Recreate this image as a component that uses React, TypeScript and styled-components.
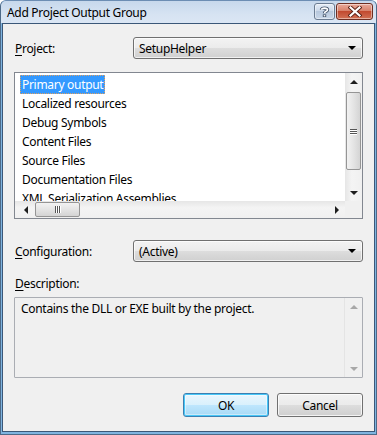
import React from 'react';
import styled, { createGlobalStyle } from 'styled-components';

const Global = createGlobalStyle`
  html, body {
    margin: 0;
    padding: 0;
    background: #ffffff;
  }
  * {
    box-sizing: border-box;
  }
`;

const Window = styled.div`
  width: 377px;
  height: 435px;
  display: flex;
  flex-direction: column;
  background: #7fb4e0;
  border: 1px solid #4d6a88;
  border-top-color: #6c8db3;
  border-radius: 6px 6px 0 0;
  padding: 0 1px 2px 1px;
  font-family: 'Noto Sans', 'Open Sans', sans-serif;
  font-size: 12px;
  letter-spacing: -0.3px;
  color: #000;
`;

const TitleBar = styled.div`
  height: 22px;
  flex: none;
  display: flex;
  align-items: center;
  padding: 0 3px 0 6px;
  margin: 0 -1px;
  border-radius: 5px 5px 0 0;
  background: linear-gradient(#c7d8ec, #d6e3f2 60%, #dbe6f4);
`;

const Title = styled.div`
  flex: 1;
  font-size: 12px;
  color: #000;
  padding-top: 1px;
`;

const CaptionButton = styled.div<{ $danger?: boolean }>`
  height: 17px;
  width: ${(p) => (p.$danger ? '37px' : '21px')};
  margin-left: ${(p) => (p.$danger ? '1px' : '0')};
  border: 1px solid ${(p) => (p.$danger ? '#6e2e22' : '#6b7c92')};
  border-radius: 3px;
  display: flex;
  align-items: center;
  justify-content: center;
  background: ${(p) =>
    p.$danger
      ? 'linear-gradient(#e9a99a, #d8826c 45%, #c24a30 50%, #d27256)'
      : 'linear-gradient(#e4ecf6, #ccd9ea 45%, #b7c8dd 50%, #c9d7e8)'};
  box-shadow: inset 0 0 0 1px rgba(255, 255, 255, 0.45);
  margin-top: -2px;
`;

const Client = styled.div`
  flex: 1;
  background: #f0f0f0;
  border: 1px solid #3b5778;
  display: flex;
  flex-direction: column;
  padding: 13px 11px 0 11px;
`;

const FieldRow = styled.div`
  display: flex;
  align-items: center;
  height: 22px;
`;

const Label = styled.div`
  width: 119px;
  flex: none;
  padding-left: 1px;
`;

const Key = styled.span`
  text-decoration: underline;
  text-underline-offset: 2px;
`;

const Combo = styled.div`
  flex: 1;
  height: 22px;
  border: 1px solid #707070;
  border-radius: 3px;
  background: linear-gradient(#f3f3f3, #ebebeb 50%, #dddddd 51%, #d0d0d0);
  box-shadow: inset 0 0 0 1px rgba(255, 255, 255, 0.7);
  display: flex;
  align-items: center;
  padding: 0 6px 0 5px;
`;

const ComboText = styled.div`
  flex: 1;
`;

const Caret = styled.div`
  width: 0;
  height: 0;
  border-left: 4px solid transparent;
  border-right: 4px solid transparent;
  border-top: 4px solid #000;
`;

const ListBox = styled.div`
  margin-top: 13px;
  height: 147px;
  border: 1px solid #828790;
  background: #fff;
  display: grid;
  grid-template-columns: 1fr 17px;
  grid-template-rows: 1fr 17px;
`;

const Items = styled.div`
  overflow: hidden;
  padding: 2px 4px 0 5px;
  display: flex;
  flex-direction: column;
`;

const Item = styled.div<{ $selected?: boolean }>`
  height: 19px;
  line-height: 19px;
  flex: none;
  align-self: flex-start;
  padding: 0 2px;
  white-space: nowrap;
  color: ${(p) => (p.$selected ? '#fff' : '#000')};
  background: ${(p) => (p.$selected ? '#3399ff' : 'transparent')};
  outline: ${(p) => (p.$selected ? '1px dotted #e0a060' : 'none')};
  outline-offset: -1px;
`;

const VScroll = styled.div`
  background: linear-gradient(90deg, #e6e6e6, #f4f4f4 40%, #f0f0f0);
  display: flex;
  flex-direction: column;
  align-items: center;
  justify-content: space-between;
`;

const HScroll = styled.div`
  background: linear-gradient(#e6e6e6, #f4f4f4 40%, #f0f0f0);
  display: flex;
  align-items: center;
  padding: 0 0 0 6px;
`;

const Corner = styled.div`
  background: #f0f0f0;
`;

const ArrowBox = styled.div<{ $h?: boolean }>`
  width: ${(p) => (p.$h ? '10px' : '17px')};
  height: 17px;
  display: flex;
  align-items: center;
  justify-content: center;
  flex: none;
`;

const Tri = styled.div<{ $dir: 'up' | 'down' | 'left' | 'right'; $dim?: boolean }>`
  width: 0;
  height: 0;
  ${(p) => {
    const c = p.$dim ? '#a8a8a8' : '#1e1e1e';
    if (p.$dir === 'up')
      return `border-left:4px solid transparent;border-right:4px solid transparent;border-bottom:4px solid ${c};`;
    if (p.$dir === 'down')
      return `border-left:4px solid transparent;border-right:4px solid transparent;border-top:4px solid ${c};`;
    if (p.$dir === 'left')
      return `border-top:4px solid transparent;border-bottom:4px solid transparent;border-right:4px solid ${c};`;
    return `border-top:4px solid transparent;border-bottom:4px solid transparent;border-left:4px solid ${c};`;
  }}
`;

const VThumb = styled.div`
  width: 15px;
  height: 78px;
  margin-bottom: auto;
  margin-top: 2px;
  border: 1px solid #959595;
  border-radius: 2px;
  background: linear-gradient(90deg, #f2f2f2, #e4e4e4 50%, #d4d4d4);
  display: flex;
  align-items: center;
  justify-content: center;
`;

const HThumb = styled.div`
  width: 45px;
  height: 15px;
  margin-left: 4px;
  margin-right: auto;
  border: 1px solid #959595;
  border-radius: 2px;
  background: linear-gradient(#f2f2f2, #e4e4e4 50%, #d4d4d4);
  display: flex;
  align-items: center;
  justify-content: center;
`;

const Grip = styled.div<{ $h?: boolean }>`
  display: flex;
  flex-direction: ${(p) => (p.$h ? 'row' : 'column')};
  gap: 1px;
  & > i {
    display: block;
    background: #555;
    width: ${(p) => (p.$h ? '1px' : '7px')};
    height: ${(p) => (p.$h ? '7px' : '1px')};
    box-shadow: ${(p) => (p.$h ? '1px 0 0 #fff' : '0 1px 0 #fff')};
  }
`;

const ConfigRow = styled(FieldRow)`
  margin-top: 21px;
`;

const DescLabel = styled.div`
  margin-top: 13px;
  padding-left: 1px;
  line-height: 17px;
`;

const DescBox = styled.div`
  margin-top: 5px;
  height: 81px;
  border: 1px solid #aaadb3;
  border-radius: 1px;
  background: #f0f0f0;
  display: flex;
`;

const DescText = styled.div`
  flex: 1;
  padding: 2px 6px;
  line-height: 17px;
`;

const DescScroll = styled(VScroll)`
  width: 18px;
  background: #f0f0f0;
  border-left: 1px solid #e4e4e4;
`;

const Footer = styled.div`
  margin-top: 15px;
  display: flex;
  justify-content: flex-end;
  gap: 8px;
`;

const Button = styled.div<{ $default?: boolean }>`
  width: 86px;
  height: 24px;
  border-radius: 3px;
  display: flex;
  align-items: center;
  justify-content: center;
  border: 1px solid ${(p) => (p.$default ? '#3c7fb1' : '#707070')};
  background: ${(p) =>
    p.$default
      ? 'linear-gradient(#eaf6fd, #d9f0fc 50%, #bee6fd 51%, #a7d9f5)'
      : 'linear-gradient(#f2f2f2, #ebebeb 50%, #dddddd 51%, #cfcfcf)'};
  box-shadow: ${(p) =>
    p.$default
      ? 'inset 0 0 0 1px #48c8f8, inset 0 0 0 2px rgba(255,255,255,0.4)'
      : 'inset 0 0 0 1px rgba(255,255,255,0.75)'};
`;

const items = [
  'Primary output',
  'Localized resources',
  'Debug Symbols',
  'Content Files',
  'Source Files',
  'Documentation Files',
  'XML Serialization Assemblies',
];

function HelpGlyph() {
  return (
    <svg width="11" height="11" viewBox="0 0 11 11">
      <path
        d="M2.5 3.8 C2.5 1.5 8.5 1.5 8.5 3.8 C8.5 5.6 5.5 5.5 5.5 7.2"
        fill="none"
        stroke="#44546a"
        strokeWidth="3.4"
      />
      <rect x="3.8" y="8.4" width="3.4" height="2.6" fill="#44546a" />
      <path
        d="M2.5 3.8 C2.5 1.5 8.5 1.5 8.5 3.8 C8.5 5.6 5.5 5.5 5.5 7.2"
        fill="none"
        stroke="#fff"
        strokeWidth="1.6"
      />
      <rect x="4.7" y="9.1" width="1.6" height="1.3" fill="#fff" />
    </svg>
  );
}

function CloseGlyph() {
  return (
    <svg width="14" height="11" viewBox="0 0 14 11">
      <path d="M2.5 1.5 L11.5 9.5 M11.5 1.5 L2.5 9.5" stroke="#5a2218" strokeWidth="4" strokeLinecap="square" />
      <path d="M2.5 1.5 L11.5 9.5 M11.5 1.5 L2.5 9.5" stroke="#fff" strokeWidth="2.2" strokeLinecap="square" />
    </svg>
  );
}

export default function App() {
  return (
    <>
      <Global />
      <Window>
        <TitleBar>
          <Title>Add Project Output Group</Title>
          <CaptionButton>
            <HelpGlyph />
          </CaptionButton>
          <CaptionButton $danger>
            <CloseGlyph />
          </CaptionButton>
        </TitleBar>
        <Client>
          <FieldRow>
            <Label>
              <Key>P</Key>roject:
            </Label>
            <Combo>
              <ComboText>SetupHelper</ComboText>
              <Caret />
            </Combo>
          </FieldRow>

          <ListBox>
            <Items>
              {items.map((t, i) => (
                <Item key={t} $selected={i === 0}>
                  {t}
                </Item>
              ))}
            </Items>
            <VScroll>
              <ArrowBox>
                <Tri $dir="up" />
              </ArrowBox>
              <VThumb>
                <Grip>
                  <i />
                  <i />
                  <i />
                </Grip>
              </VThumb>
              <ArrowBox>
                <Tri $dir="down" />
              </ArrowBox>
            </VScroll>
            <HScroll>
              <ArrowBox $h>
                <Tri $dir="left" />
              </ArrowBox>
              <HThumb>
                <Grip $h>
                  <i />
                  <i />
                  <i />
                </Grip>
              </HThumb>
              <ArrowBox>
                <Tri $dir="right" />
              </ArrowBox>
            </HScroll>
            <Corner />
          </ListBox>

          <ConfigRow>
            <Label>
              <Key>C</Key>onfiguration:
            </Label>
            <Combo>
              <ComboText>(Active)</ComboText>
              <Caret />
            </Combo>
          </ConfigRow>

          <DescLabel>
            <Key>D</Key>escription:
          </DescLabel>
          <DescBox>
            <DescText>Contains the DLL or EXE built by the project.</DescText>
            <DescScroll>
              <ArrowBox>
                <Tri $dir="up" $dim />
              </ArrowBox>
              <ArrowBox>
                <Tri $dir="down" $dim />
              </ArrowBox>
            </DescScroll>
          </DescBox>

          <Footer>
            <Button $default>OK</Button>
            <Button>Cancel</Button>
          </Footer>
        </Client>
      </Window>
    </>
  );
}
